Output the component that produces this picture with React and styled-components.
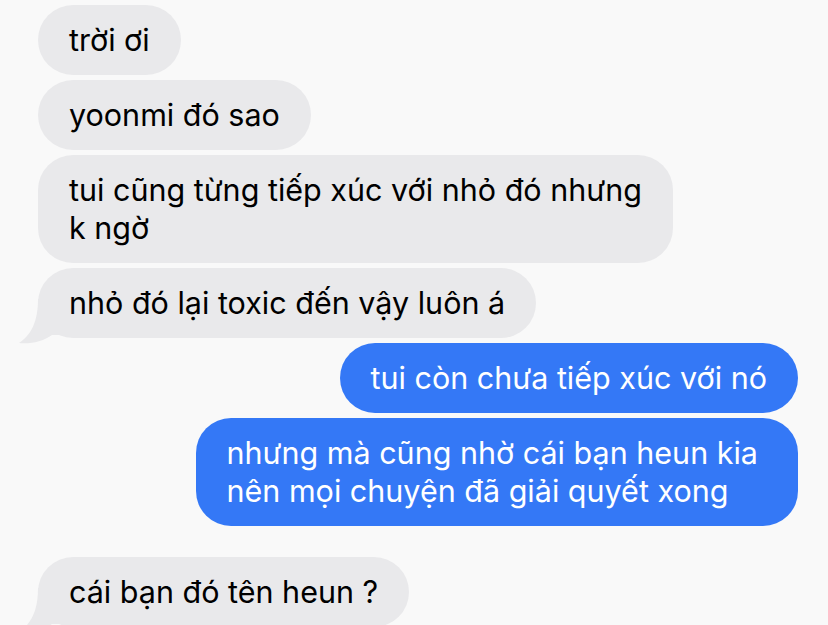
import React from "react";
import styled, { createGlobalStyle } from "styled-components";

const Global = createGlobalStyle`
  html, body { margin: 0; padding: 0; background: #f9f9f9; overflow: hidden; }
  body { font-family: Inter, "Noto Sans", "Liberation Sans", sans-serif; }
`;

const Thread = styled.div`
  display: flex;
  flex-direction: column;
  padding: 5px 30px 0 38px;
  height: 625px;
  box-sizing: border-box;
`;

const Bubble = styled.div`
  position: relative;
  align-self: ${(p) => (p.$me ? "flex-end" : "flex-start")};
  background: ${(p) => (p.$me ? "#3478f6" : "#e9e9eb")};
  color: ${(p) => (p.$me ? "#ffffff" : "#000000")};
  font-size: 30.5px;
  line-height: 38px;
  padding: 16px ${(p) => p.$padRight || 31}px 16px 31px;
  border-radius: 35px;
  white-space: pre-line;
  margin-top: ${(p) => (p.$gap ? "31px" : "5px")};
  &:first-child { margin-top: 0; }
`;

const TailSvg = styled.svg`
  position: absolute;
  left: -20px;
  bottom: -7px;
  width: 60px;
  height: 50px;
  z-index: 0;
`;

const Text = styled.span`
  position: relative;
  z-index: 2;
`;

function Tail() {
  return (
    <TailSvg viewBox="0 0 60 50" aria-hidden="true">
      <path
        d="M20 4 C20 27 13 40 1 48 C13 49 24 47 34 40 L60 40 L60 4 Z"
        fill="#e9e9eb"
      />
    </TailSvg>
  );
}

const messages = [
  { text: "trời ơi" },
  { text: "yoonmi đó sao" },
  { text: "tui cũng từng tiếp xúc với nhỏ đó nhưng\nk ngờ" },
  { text: "nhỏ đó lại toxic đến vậy luôn á", tail: true },
  { text: "tui còn chưa tiếp xúc với nó", me: true },
  { text: "nhưng mà cũng nhờ cái bạn heun kia\nnên mọi chuyện đã giải quyết xong", me: true, padRight: 40 },
  { text: "cái bạn đó tên heun ?", tail: true, gap: true },
];

export default function App() {
  return (
    <>
      <Global />
      <Thread>
        {messages.map((m, i) => (
          <Bubble key={i} $me={m.me} $gap={m.gap} $padRight={m.padRight}>
            {m.tail && <Tail />}
            <Text>{m.text}</Text>
          </Bubble>
        ))}
      </Thread>
    </>
  );
}
